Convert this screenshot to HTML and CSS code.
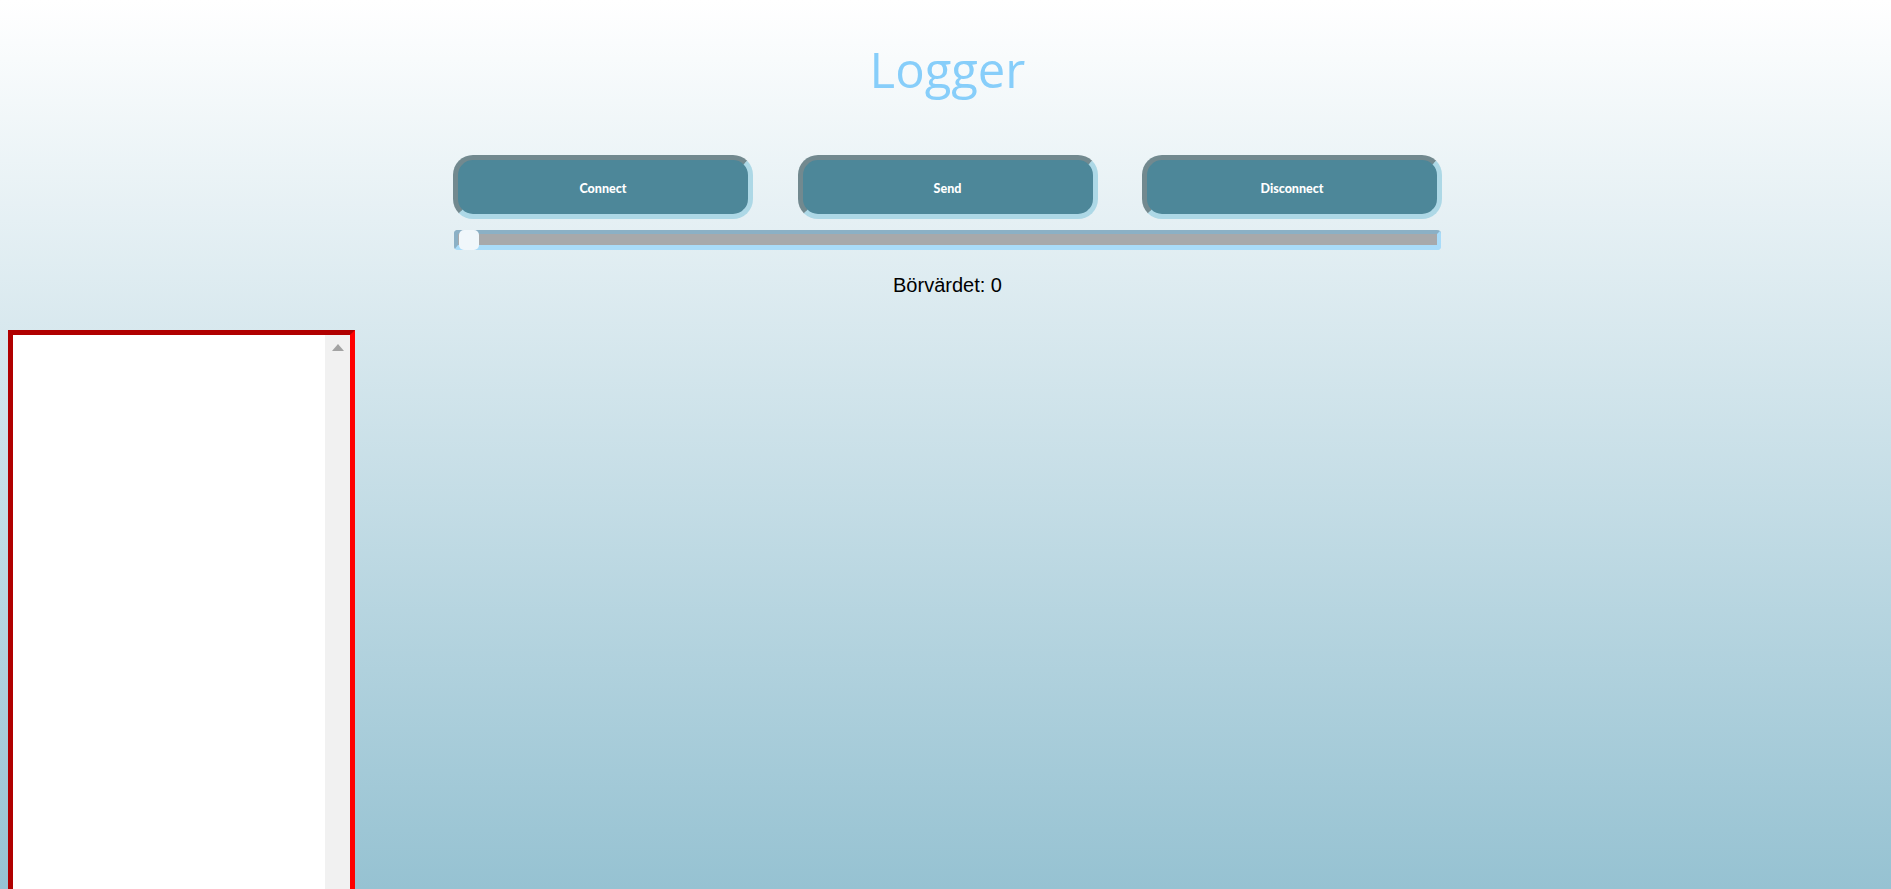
FILE: index.html
```html
<!DOCTYPE html>
<html lang="sv">
<head>
<meta charset="utf-8">
<title>Logger</title>
<link rel="stylesheet" href="styles.css">
</head>
<body>
  <h1 class="title">Logger</h1>
  <div class="controls">
    <div class="buttons">
      <button class="btn">Connect</button>
      <button class="btn">Send</button>
      <button class="btn">Disconnect</button>
    </div>
    <div class="slider" role="slider" aria-valuenow="0">
      <div class="thumb"></div>
    </div>
    <p class="value">Börvärdet: 0</p>
  </div>
  <div class="log">
    <textarea class="log-text"></textarea>
    <div class="scrollbar"><div class="arrow"></div></div>
  </div>
</body>
</html>
```
FILE: styles.css
```css
html {
  height: 100%;
  overflow: hidden;
}
body {
  margin: 0;
  height: 100%;
  overflow: hidden;
  background: linear-gradient(to bottom, #ffffff 0px, #96c2d2 889px);
  font-family: "Liberation Sans", Arial, sans-serif;
}
.title {
  margin: 0;
  padding: 39px 0 0 4px;
  line-height: 60px;
  font-family: "Open Sans", sans-serif;
  font-weight: 400;
  font-size: 49px;
  color: #87cefa;
  text-align: center;
}
.controls {
  width: 989px;
  margin: 56px auto 0;
  padding-left: 4px;
}
.buttons {
  display: flex;
  justify-content: space-between;
}
.btn {
  width: 300px;
  height: 64px;
  box-sizing: border-box;
  border: 5px solid;
  border-color: #72898f #add8e6 #add8e6 #72898f;
  border-radius: 20px;
  background: #4d8799;
  color: #ffffff;
  font-family: "Lato", "Open Sans", sans-serif;
  font-weight: 900;
  font-size: 12.5px;
  padding: 2px 0 0;
}
.slider {
  margin: 11px 1px 0;
  height: 20px;
  box-sizing: border-box;
  border-style: solid;
  border-width: 4px 4px 5px 4px;
  border-color: #8bb0c5 #a9dcf9 #a9dcf9 #8bb0c5;
  border-radius: 4px;
  background: #a7a9ab;
  display: flex;
  align-items: center;
}
.thumb {
  flex: none;
  width: 20px;
  height: 20px;
  margin-left: 1px;
  border-radius: 5px;
  background: #f0f7fb;
}
.value {
  margin: 24px 0 0;
  font-size: 20px;
  line-height: 23px;
  text-align: center;
  color: #000;
}
.log {
  margin: 33px 0 0 8px;
  width: 347px;
  height: 600px;
  box-sizing: border-box;
  border: 5px solid;
  border-color: #b00000 #ff0000 #ff0000 #b00000;
  background: #ffffff;
  display: flex;
}
.log-text {
  flex: 1;
  border: none;
  outline: none;
  resize: none;
  margin: 0;
  padding: 2px;
  background: #ffffff;
  overflow: hidden;
}
.scrollbar {
  flex: none;
  width: 25px;
  background: #f1f1f1;
  display: flex;
  flex-direction: column;
  align-items: center;
}
.arrow {
  margin-top: 9px;
  width: 0;
  height: 0;
  border-left: 6px solid transparent;
  border-right: 6px solid transparent;
  border-bottom: 7px solid #a3a3a3;
}
```
